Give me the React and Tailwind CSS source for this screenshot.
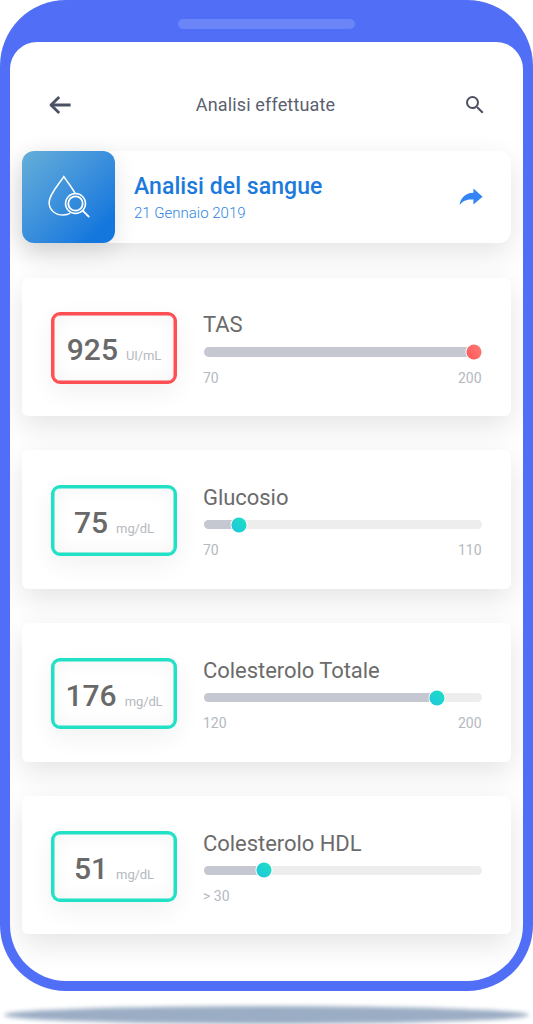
import React from 'react';
import { MdSearch } from 'react-icons/md';

const results = [
  { name: 'TAS', value: '925', unit: 'UI/mL', min: '70', max: '200', position: 270.3, alert: true },
  { name: 'Glucosio', value: '75', unit: 'mg/dL', min: '70', max: '110', position: 35.8 },
  { name: 'Colesterolo Totale', value: '176', unit: 'mg/dL', min: '120', max: '200', position: 233.3 },
  { name: 'Colesterolo HDL', value: '51', unit: 'mg/dL', min: '> 30', max: '', position: 60.2 },
];

const BackIcon = () => (
  <svg width="22" height="18" viewBox="0 0 22 18" fill="none" stroke="#4b5063" strokeWidth="2.8">
    <path d="M21.6 9H2" />
    <path d="M10.2 1.1L2 9l8.2 7.9" strokeLinejoin="round" />
  </svg>
);

const ShareIcon = () => (
  <svg width="24" height="18" viewBox="0 0 24 18" fill="#3384f5">
    <path d="M14.4 0.5L23.6 8.7l-9.2 7.7v-4.9C8.6 11.1 3.9 12.4 0.6 17.1C1.4 10.2 6.2 5.2 14.4 4.8z" />
  </svg>
);

const BloodIcon = () => (
  <svg width="44" height="44" viewBox="0 0 44 44" fill="none" stroke="#fff" strokeWidth="1.5">
    <path d="M27.2 18.6C24.5 13.4 20.3 8.2 15.8 1.6C10.6 9.8 1.1 19.2 1.1 27.5C1.1 35.3 7.7 40.1 15.3 40.1C18 40.1 20.3 39.5 22.3 38.2" />
    <circle cx="27.5" cy="28.5" r="10" />
    <circle cx="27.5" cy="28.5" r="7.2" strokeWidth="1.8" />
    <path d="M34.7 35.7L41.2 42.2" strokeWidth="1.9" />
  </svg>
);

const Header = () => (
  <header className="flex h-[24px] items-center justify-between pl-[27px] pr-[24px]">
    <BackIcon />
    <h1 className="-ml-[3px] text-[18px] leading-6 tracking-[0.15px] text-[#5b5f70]">Analisi effettuate</h1>
    <MdSearch size={24} color="#4b5063" />
  </header>
);

const SummaryCard = () => (
  <section className="mt-[33.5px] flex h-[92.5px] items-center rounded-[12px] bg-white shadow-[0_10px_30px_rgba(0,0,0,0.11)]">
    <div className="flex size-[92.5px] shrink-0 items-center justify-center rounded-[12px] bg-linear-to-br from-[#61abd9] from-5% to-[#1377dd] to-85% pl-[4px] shadow-[0_8px_24px_rgba(0,0,0,0.11)]">
      <BloodIcon />
    </div>
    <div className="ml-[19.5px] flex-1 pt-[5px]">
      <h2 className="text-[23px] leading-[28px] font-medium tracking-[0.05px] text-[#1b7adb]">Analisi del sangue</h2>
      <p className="text-[15px] leading-[24px] font-light text-[#2e86de]">21 Gennaio 2019</p>
    </div>
    <div className="mr-[28px]">
      <ShareIcon />
    </div>
  </section>
);

const RangeBar = ({ position, alert }) => (
  <div className="relative mt-[10px] ml-[0.5px] h-[9.5px] w-[278px] rounded-full bg-[#ededed]">
    <div className="h-full rounded-full bg-[#c5c8d1]" style={{ width: position }} />
    <span
      className={`absolute top-1/2 size-[15px] -translate-x-1/2 -translate-y-1/2 rounded-full shadow-[0_0_0_1px_#fff] ${
        alert ? 'bg-linear-to-bl from-[#ff7b76] to-[#ff5558]' : 'bg-linear-to-tr from-[#20c5e0] to-[#1fe0c0]'
      }`}
      style={{ left: position }}
    />
  </div>
);

const ResultCard = ({ name, value, unit, min, max, position, alert }) => (
  <li className="flex h-[138.3px] rounded-[6px] bg-white pt-[34.5px] pl-[29px] shadow-[0_10px_30px_rgba(0,0,0,0.11)]">
    <div
      className={`flex h-[71.5px] w-[126px] items-baseline justify-center rounded-[9px] border-3 pt-[13px] ${
        alert
          ? 'border-[#ff4f52] shadow-[0_8px_26px_rgba(0,0,0,0.06),inset_0_0_0_0.5px_#ff4f52,inset_0_0_20px_rgba(0,0,0,0.05)]'
          : 'border-[#20e0c5] shadow-[0_8px_26px_rgba(0,0,0,0.06),inset_0_0_0_0.5px_#20e0c5,inset_0_0_20px_rgba(0,0,0,0.05)]'
      }`}
    >
      <span className="text-[30px] leading-[44px] font-medium text-[#696969]">{value}</span>
      <span className="ml-[8px] text-[13px] tracking-[-0.1px] text-[#b4b9c0]">{unit}</span>
    </div>
    <div className="ml-[26px] w-[278.5px]">
      <h3 className="pt-px text-[22px] leading-6 tracking-[-0.05px] text-[#6b6b6b]">{name}</h3>
      <RangeBar position={position} alert={alert} />
      <div className="mt-[13px] flex justify-between text-[14px] leading-4 text-[#b4b9c0]">
        <span>{min}</span>
        <span>{max}</span>
      </div>
    </div>
  </li>
);

export default function App() {
  return (
    <div className="h-[1024px] w-[533px] overflow-hidden bg-white font-[Roboto,sans-serif]">
      <div className="h-[991px] rounded-[66px] bg-[#506ff6] px-[10px] pt-[18.5px]">
        <div className="mx-auto h-[10px] w-[177px] rounded-full bg-[#6b85f8]" />
        <main className="mt-[13.5px] h-[938.5px] overflow-hidden rounded-t-[27px] rounded-b-[56px] bg-white px-[12px] pt-[51px]">
          <Header />
          <SummaryCard />
          <ul className="mt-[34.5px] flex flex-col gap-[34.6px]">
            {results.map((result) => (
              <ResultCard key={result.name} {...result} />
            ))}
          </ul>
        </main>
      </div>
      {/* Ground shadow under the phone */}
      <div className="mx-[4px] mt-[15px] h-[18px] rounded-[50%] bg-[#9badc4] blur-[2px]" />
    </div>
  );
}
